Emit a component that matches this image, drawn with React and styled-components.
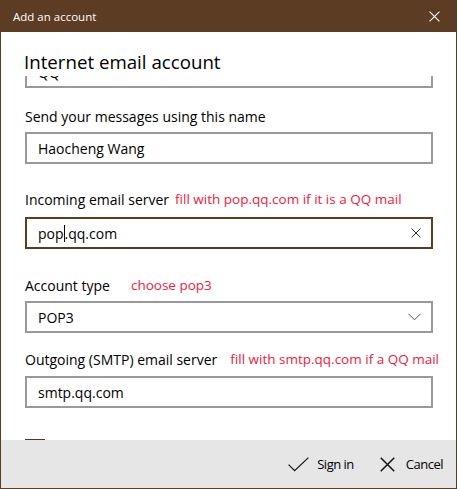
import React from "react";
import styled, { createGlobalStyle } from "styled-components";

const GlobalStyle = createGlobalStyle`
  html, body {
    margin: 0;
    padding: 0;
    background: #ffffff;
  }
  body {
    font-family: "Open Sans", "Noto Sans", sans-serif;
    color: #000000;
  }
`;

const BROWN = "#5c3c22";

const Window = styled.div`
  width: 457px;
  height: 489px;
  box-sizing: border-box;
  border: 1px solid ${BROWN};
  display: flex;
  flex-direction: column;
  background: #ffffff;
`;

const TitleBar = styled.div`
  height: 31px;
  flex-shrink: 0;
  background: ${BROWN};
  color: #ffffff;
  display: flex;
  align-items: center;
  justify-content: space-between;
  padding: 0 16px 0 12px;
  font-size: 11.5px;
`;

const Body = styled.div`
  flex: 1;
  display: flex;
  flex-direction: column;
  min-height: 0;
`;

const Heading = styled.div`
  height: 44px;
  flex-shrink: 0;
  box-sizing: border-box;
  padding: 18px 0 0 23px;
  font-size: 18.7px;
  line-height: 24px;
`;

const Scroller = styled.div`
  flex: 1;
  min-height: 0;
  overflow: hidden;
  padding: 0 23px 0 24px;
`;

const Track = styled.div`
  margin-top: -20px;
  display: flex;
  flex-direction: column;
`;

const Label = styled.div`
  margin-top: ${(p) => p.$top}px;
  height: 20px;
  flex-shrink: 0;
  display: flex;
  align-items: center;
  font-size: 14px;
  white-space: nowrap;
`;

const Note = styled.span`
  color: #f0203c;
  font-size: 13.5px;
  margin-left: ${(p) => p.$left}px;
`;

const Box = styled.div`
  margin-top: ${(p) => p.$top}px;
  height: 32px;
  flex-shrink: 0;
  box-sizing: border-box;
  border: 2px solid ${(p) => (p.$focused ? BROWN : "#999999")};
  display: flex;
  align-items: center;
  justify-content: space-between;
  padding: 0 10px 0 11px;
  font-size: 14px;
`;

const Caret = styled.span`
  display: inline-block;
  width: 1px;
  height: 17px;
  background: #000000;
  vertical-align: -3px;
`;

const Check = styled.div`
  margin-top: 31px;
  width: 20px;
  height: 20px;
  flex-shrink: 0;
  box-sizing: border-box;
  border: 1px solid #4a3826;
`;

const Footer = styled.div`
  height: 48px;
  flex-shrink: 0;
  background: #e6e6e6;
  display: flex;
  align-items: center;
  justify-content: flex-end;
  gap: 26px;
  padding-right: 13px;
  font-size: 13px;
  letter-spacing: -0.5px;
`;

const Action = styled.div`
  display: flex;
  align-items: center;
  gap: ${(p) => p.$gap}px;
  color: #000000;
`;

const Cross = ({ size, color, width = 1 }) => (
  <svg width={size} height={size} viewBox="0 0 10 10">
    <path d="M0.5 0.5L9.5 9.5M9.5 0.5L0.5 9.5" stroke={color} strokeWidth={width} fill="none" />
  </svg>
);

const Chevron = () => (
  <svg width="13" height="8" viewBox="0 0 13 8">
    <path d="M0.5 0.8L6.5 6.8L12.5 0.8" stroke="#555" strokeWidth="1" fill="none" />
  </svg>
);

const Tick = () => (
  <svg width="21" height="15" viewBox="0 0 21 15">
    <path d="M0.6 7.6L6.6 13.6L20.4 0.6" stroke="#111" strokeWidth="1.2" fill="none" />
  </svg>
);

export default function App() {
  return (
    <>
      <GlobalStyle />
      <Window>
        <TitleBar>
          <span>Add an account</span>
          <Cross size={11} color="#ffffff" />
        </TitleBar>
        <Body>
          <Heading>Internet email account</Heading>
          <Scroller>
            <Track>
              <Box $top={0}>QQ</Box>
              <Label $top={18}>Send your messages using this name</Label>
              <Box $top={6}>Haocheng Wang</Box>
              <Label $top={25}>
                Incoming email server
                <Note $left={6}>fill with pop.qq.com if it is a QQ mail</Note>
              </Label>
              <Box $top={8} $focused>
                <span>
                  pop<Caret />.qq.com
                </span>
                <Cross size={10} color="#333333" />
              </Box>
              <Label $top={26}>
                Account type
                <Note $left={21}>choose pop3</Note>
              </Label>
              <Box $top={6}>
                POP3
                <Chevron />
              </Box>
              <Label $top={16}>
                Outgoing (SMTP) email server
                <Note $left={13}>fill with smtp.qq.com if a QQ mail</Note>
              </Label>
              <Box $top={7}>smtp.qq.com</Box>
              <Check />
            </Track>
          </Scroller>
        </Body>
        <Footer>
          <Action $gap={8}>
            <Tick />
            <span>Sign in</span>
          </Action>
          <Action $gap={11}>
            <Cross size={15} color="#111111" />
            <span>Cancel</span>
          </Action>
        </Footer>
      </Window>
    </>
  );
}
